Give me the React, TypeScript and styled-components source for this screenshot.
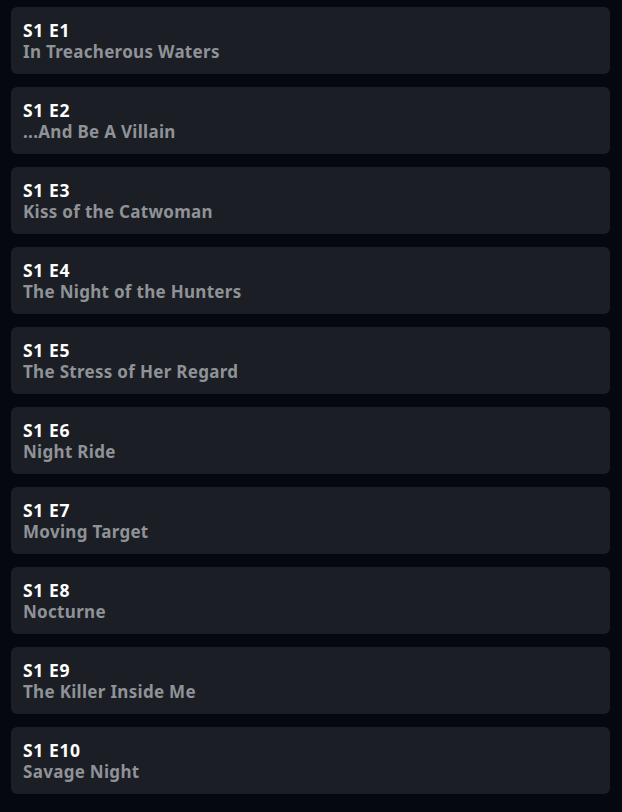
import React from "react";
import styled, { createGlobalStyle } from "styled-components";

const Global = createGlobalStyle`
  html, body { margin: 0; padding: 0; background: #05080e; }
  body { font-family: "Noto Sans", "Open Sans", sans-serif; }
`;

const List = styled.ul`
  list-style: none;
  margin: 0;
  padding: 7px 12px 12px 11px;
  display: flex;
  flex-direction: column;
  gap: 13px;
`;

const Card = styled.li`
  background: #1b1e24;
  border-radius: 6px;
  height: 67px;
  box-sizing: border-box;
  padding: 12px 12px 0 12px;
  display: flex;
  flex-direction: column;
`;

const Code = styled.span`
  color: #ffffff;
  font-weight: 700;
  font-size: 17.5px;
  letter-spacing: 0.6px;
  line-height: 22px;
`;

const Title = styled.span`
  color: #8f9297;
  font-weight: 700;
  font-size: 17px;
  letter-spacing: 0.3px;
  line-height: 22px;
`;

const episodes = [
  "In Treacherous Waters",
  "...And Be A Villain",
  "Kiss of the Catwoman",
  "The Night of the Hunters",
  "The Stress of Her Regard",
  "Night Ride",
  "Moving Target",
  "Nocturne",
  "The Killer Inside Me",
  "Savage Night",
];

export default function App() {
  return (
    <>
      <Global />
      <List>
        {episodes.map((t, i) => (
          <Card key={i}>
            <Code>S1 E{i + 1}</Code>
            <Title>{t}</Title>
          </Card>
        ))}
      </List>
    </>
  );
}
